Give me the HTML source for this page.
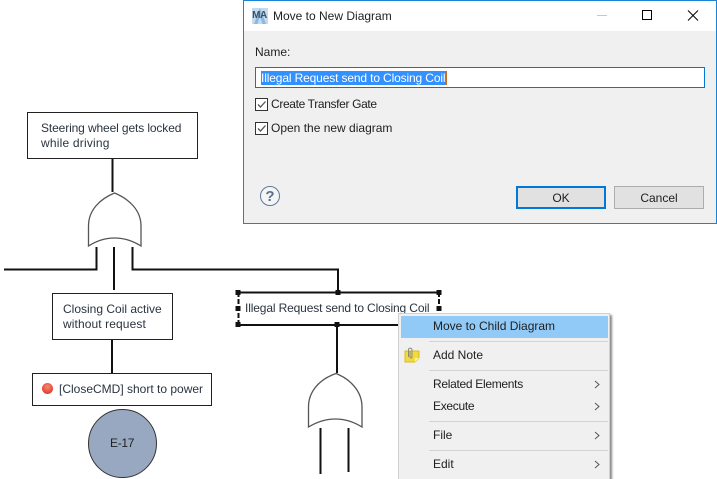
<!DOCTYPE html>
<html>
<head>
<meta charset="utf-8">
<style>
html,body{margin:0;padding:0;background:#fff;}
#p{position:relative;width:717px;height:479px;overflow:hidden;background:#fff;font-family:"Liberation Sans",sans-serif;font-size:12px;color:#1e1e1e;}
#p div{position:absolute;box-sizing:border-box;}
.t{white-space:nowrap;line-height:16px;height:16px;}
.d{color:#2a3440;}
.box{background:#fff;border:1px solid #222;}
.sep{background:#d4d4d4;height:1px;left:429px;width:179px;}
</style>
</head>
<body>
<div id="p">

<svg style="position:absolute;left:0;top:0" width="717" height="479" viewBox="0 0 717 479">
  <g fill="none" stroke="#111" stroke-width="2">
    <path d="M112.500 158V192"/>
    <path d="M4 269.500H96.500V247"/>
    <path d="M114 247V290"/>
    <path d="M132.500 247V269.500H338V292"/>
    <path d="M112 339V373"/>
    <path d="M337 325V373"/>
    <path d="M320.500 428V474"/>
    <path d="M348.500 428V472"/>
  </g>
  <g fill="#fff" stroke="#555" stroke-width="1.300">
    <path d="M88.500 246V226C88.500 210 100 199 114.500 193C129 199 141 210 141 226V246C124 235.300 105 235.300 88.500 246Z"/>
    <path d="M308.500 427V407C308.500 391 320 379 336 373.500C350 379 362 391 362 407V427C345 416.300 326 416.300 308.500 427Z"/>
  </g>
  <circle cx="122.500" cy="443.500" r="34" fill="#98a8c0" stroke="#333" stroke-width="1"/>
  <!-- selected node -->
  <g fill="none" stroke="#111" stroke-width="2">
    <path d="M238 292.500H439"/>
    <path d="M238.500 292V325" stroke-dasharray="5 2"/>
    <path d="M439 292V312" stroke-dasharray="5 2"/>
    <path d="M238 325H400"/>
  </g>
  <g fill="#111">
    <rect x="235.500" y="290" width="5" height="5"/>
    <rect x="335.500" y="290" width="5" height="5"/>
    <rect x="436.500" y="290" width="5" height="5"/>
    <rect x="235.500" y="306" width="5" height="5"/>
    <rect x="436.500" y="306" width="5" height="5"/>
    <rect x="235.500" y="322" width="5" height="5"/>
    <rect x="334.500" y="322" width="5" height="5"/>
  </g>
</svg>

<div class="box" style="left:27px;top:112px;width:171px;height:47px;"></div>
<div class="t d" style="left:41px;top:120px;letter-spacing:-.12px;">Steering wheel gets locked</div>
<div class="t d" style="left:41px;top:135px;letter-spacing:.2px;">while driving</div>

<div class="box" style="left:52px;top:293px;width:121px;height:47px;"></div>
<div class="t d" style="left:63px;top:301px;">Closing Coil active</div>
<div class="t d" style="left:63px;top:316px;letter-spacing:.1px;">without request</div>

<div class="box" style="left:32px;top:373px;width:180px;height:33px;"></div>
<div style="left:42px;top:383px;width:11px;height:11px;border-radius:50%;background:radial-gradient(circle at 50% 35%,#f58a78,#e0432f 70%);"></div>
<div class="t d" style="left:59px;top:381px;">[CloseCMD] short to power</div>

<div class="t" style="left:110px;top:435px;color:#222;letter-spacing:-.3px;">E-17</div>

<div class="t d" style="left:245px;top:300px;letter-spacing:-.14px;">Illegal Request send to Closing Coil</div>

<!-- context menu -->
<div style="left:398px;top:313px;width:212px;height:170px;background:#f0f0f0;border:1px solid #d0d0d0;box-shadow:2px 2px 2px #8a8a8a;"></div>
<div style="left:401px;top:316px;width:207px;height:22px;background:#91c9f7;"></div>
<div class="sep" style="top:341px;"></div>
<div class="sep" style="top:370px;"></div>
<div class="sep" style="top:421px;"></div>
<div class="sep" style="top:450px;"></div>
<div class="t" style="left:433px;top:318px;">Move to Child Diagram</div>
<div class="t" style="left:433px;top:347px;">Add Note</div>
<div class="t" style="left:433px;top:376px;letter-spacing:-.3px;">Related Elements</div>
<div class="t" style="left:433px;top:398px;letter-spacing:-.3px;">Execute</div>
<div class="t" style="left:433px;top:427px;">File</div>
<div class="t" style="left:433px;top:456px;">Edit</div>
<svg style="position:absolute;left:0;top:0" width="717" height="479" viewBox="0 0 717 479">
  <g fill="none" stroke="#555" stroke-width="1">
    <path d="M595 381L599 384.500L595 388"/>
    <path d="M595 403L599 406.500L595 410"/>
    <path d="M595 432L599 435.500L595 439"/>
    <path d="M595 461L599 464.500L595 468"/>
  </g>
  <path d="M405 351H419V358L415 362H405Z" fill="#f2d93c" stroke="#d8bc28" stroke-width="1"/>
  <path d="M415 362V358H419Z" fill="#fff3a8"/>
  <path d="M408.500 357V349.500A1.800 1.800 0 0 1 412 349.500V357A1 1 0 0 1 410 357V351" fill="none" stroke="#8a8a7a" stroke-width="1"/>
</svg>

<!-- dialog -->
<div style="left:243px;top:0;width:474px;height:224px;background:#f0f0f0;border:1px solid #1883d7;"></div>
<div style="left:244px;top:1px;width:472px;height:30px;background:#fff;"></div>
<svg style="position:absolute;left:251px;top:7px" width="18" height="18" viewBox="0 0 18 18">
  <rect x="1" y="1" width="16" height="16" fill="#c3dbf0"/>
  <path d="M9 1L15 17H11.500L9 9L6.500 17H3Z" fill="#8cb8e0"/>
</svg>
<div style="left:251px;top:9px;width:17px;height:13px;line-height:13px;font-size:10px;font-weight:bold;color:#3f4f60;text-align:center;letter-spacing:-.4px;">MA</div>
<div class="t" style="left:273px;top:8px;">Move to New Diagram</div>

<svg style="position:absolute;left:590px;top:0" width="120" height="30" viewBox="590 0 120 30">
  <path d="M597 15.500H607" stroke="#c8c8c8" stroke-width="1"/>
  <rect x="642.500" y="10.500" width="9" height="9" fill="none" stroke="#000" stroke-width="1"/>
  <path d="M688 10.500L698 20.500M698 10.500L688 20.500" stroke="#000" stroke-width="1" fill="none"/>
</svg>

<div class="t" style="left:255px;top:44px;">Name:</div>

<div style="left:255px;top:67px;width:450px;height:21px;background:#fff;border:1px solid #0078d7;"></div>
<div style="left:261px;top:71px;width:185px;height:14px;background:#3390ff;"></div>
<div style="left:446px;top:71px;width:1px;height:14px;background:#c86a20;"></div>
<div class="t" style="left:261px;top:70px;color:#fff;letter-spacing:-.14px;">Illegal Request send to Closing Coil</div>

<svg style="position:absolute;left:255px;top:97px" width="14" height="40" viewBox="0 0 14 40">
  <rect x="0.500" y="1.500" width="12" height="12" fill="#fff" stroke="#333"/>
  <path d="M3 7.500L5.500 10L10.500 4.500" fill="none" stroke="#555" stroke-width="1.300"/>
  <rect x="0.500" y="25.500" width="12" height="12" fill="#fff" stroke="#333"/>
  <path d="M3 31.500L5.500 34L10.500 28.500" fill="none" stroke="#555" stroke-width="1.300"/>
</svg>
<div class="t" style="left:271px;top:96px;letter-spacing:-.35px;">Create Transfer Gate</div>
<div class="t" style="left:271px;top:120px;">Open the new diagram</div>

<svg style="position:absolute;left:259px;top:185px" width="22" height="22" viewBox="0 0 22 22">
  <circle cx="11" cy="11" r="9.500" fill="#f4f5f7" stroke="#5f7a99" stroke-width="1"/>
  <text x="11" y="16" text-anchor="middle" font-family="Liberation Sans, sans-serif" font-size="15" font-weight="bold" fill="#5a6f88">?</text>
</svg>

<div style="left:516px;top:186px;width:90px;height:23px;background:#e1e1e1;border:2px solid #0078d7;"></div>
<div class="t" style="left:516px;top:190px;width:90px;text-align:center;">OK</div>
<div style="left:614px;top:186px;width:90px;height:23px;background:#e1e1e1;border:1px solid #adadad;"></div>
<div class="t" style="left:614px;top:190px;width:90px;text-align:center;">Cancel</div>

</div>
</body>
</html>
